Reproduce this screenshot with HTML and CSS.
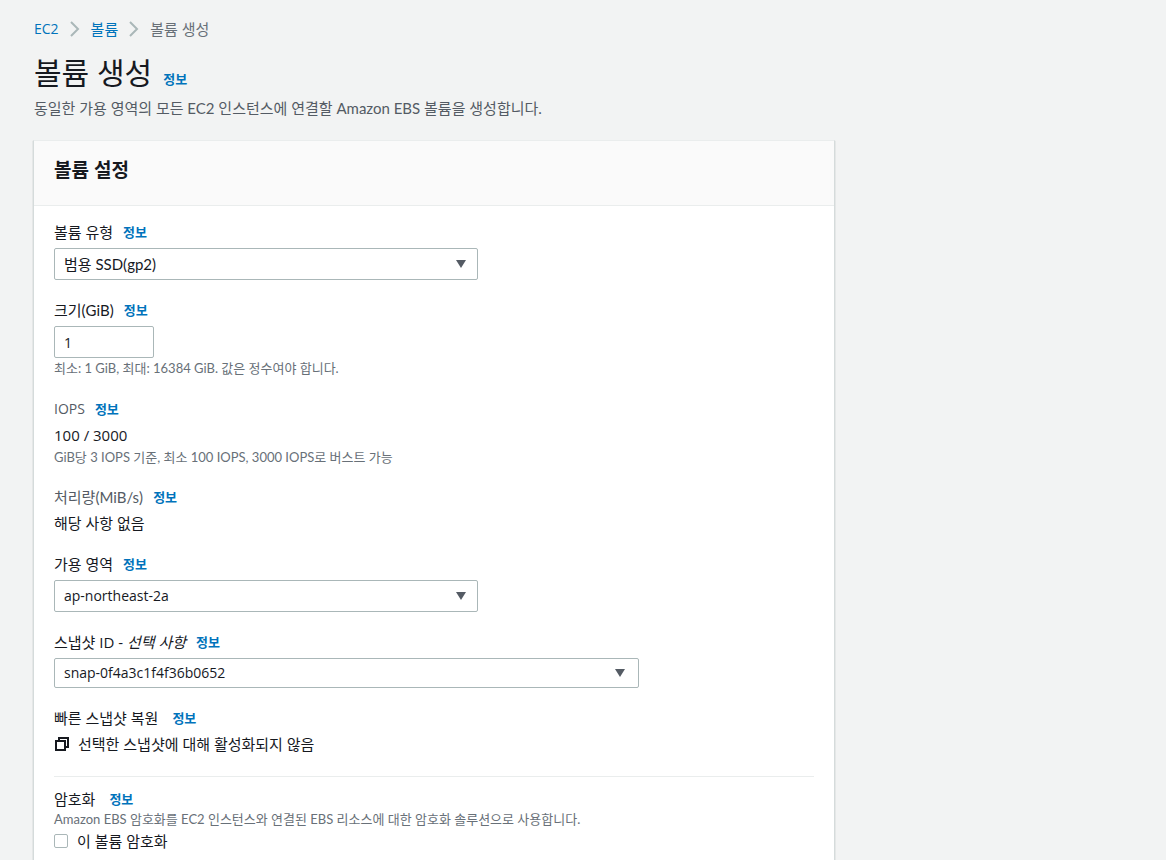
FILE: index.html
```html
<!DOCTYPE html>
<html lang="ko">

<head>
  <meta charset="UTF-8" />
  <meta name="viewport" content="width=device-width, initial-scale=1" />
  <title>볼륨 생성</title>
  <link rel="stylesheet" href="styles.css">
</head>

<body>
  <main class="page">
    <nav class="breadcrumb">
      <a class="latin" href="#ec2">EC2</a>
      <svg class="chevron" viewBox="0 0 10 16"><path d="M1 1l7 7-7 7" /></svg>
      <a href="#volumes">볼륨</a>
      <svg class="chevron" viewBox="0 0 10 16"><path d="M1 1l7 7-7 7" /></svg>
      <span>볼륨 생성</span>
    </nav>

    <header class="page-header">
      <h1>볼륨 생성</h1>
      <a class="info" href="#info">정보</a>
    </header>
    <p class="page-desc">동일한 가용 영역의 모든 EC2 인스턴스에 연결할 Amazon EBS 볼륨을 생성합니다.</p>

    <form class="card">
      <div class="card-header">
        <h2>볼륨 설정</h2>
      </div>

      <div class="card-body">
        <div class="field">
          <div class="field-label">
            <label for="volume-type">볼륨 유형</label>
            <a class="info" href="#info">정보</a>
          </div>
          <div class="select mixed">
            <select id="volume-type">
              <option>범용 SSD(gp2)</option>
            </select>
            <svg class="caret" viewBox="0 0 10 8"><path d="M0 0h10L5 8z" /></svg>
          </div>
        </div>

        <div class="field">
          <div class="field-label">
            <label class="mixed" for="size">크기(GiB)</label>
            <a class="info" href="#info">정보</a>
          </div>
          <input class="size-input" id="size" type="text" inputmode="numeric" value="1" />
          <p class="hint">최소: 1 GiB, 최대: 16384 GiB. 값은 정수여야 합니다.</p>
        </div>

        <div class="field">
          <div class="field-label muted">
            <span class="latin">IOPS</span>
            <a class="info" href="#info">정보</a>
          </div>
          <p class="value">100 / 3000</p>
          <p class="hint">GiB당 3 IOPS 기준, 최소 100 IOPS, 3000 IOPS로 버스트 가능</p>
        </div>

        <div class="field">
          <div class="field-label muted">
            <span class="mixed">처리량(MiB/s)</span>
            <a class="info" href="#info">정보</a>
          </div>
          <p class="value">해당 사항 없음</p>
        </div>

        <div class="field">
          <div class="field-label">
            <label for="zone">가용 영역</label>
            <a class="info" href="#info">정보</a>
          </div>
          <div class="select latin">
            <select id="zone">
              <option>ap-northeast-2a</option>
            </select>
            <svg class="caret" viewBox="0 0 10 8"><path d="M0 0h10L5 8z" /></svg>
          </div>
        </div>

        <div class="field">
          <div class="field-label">
            <label for="snapshot">스냅샷 ID - <em>선택 사항</em></label>
            <a class="info" href="#info">정보</a>
          </div>
          <div class="select select-wide latin">
            <select id="snapshot">
              <option>snap-0f4a3c1f4f36b0652</option>
            </select>
            <svg class="caret" viewBox="0 0 10 8"><path d="M0 0h10L5 8z" /></svg>
          </div>
        </div>

        <div class="field">
          <div class="field-label spaced">
            <span>빠른 스냅샷 복원</span>
            <a class="info" href="#info">정보</a>
          </div>
          <p class="value restore">
            <svg class="copy-icon" viewBox="0 0 14 14"><path d="M4 4V1h9v9h-3M1 4h9v9H1z" /></svg>
            선택한 스냅샷에 대해 활성화되지 않음
          </p>
        </div>

        <div class="encryption">
          <div class="field-label spaced">
            <span>암호화</span>
            <a class="info" href="#info">정보</a>
          </div>
          <p class="hint">Amazon EBS 암호화를 EC2 인스턴스와 연결된 EBS 리소스에 대한 암호화 솔루션으로 사용합니다.</p>
          <label class="checkbox">
            <input type="checkbox" />
            이 볼륨 암호화
          </label>
        </div>
      </div>
    </form>
  </main>
</body>

</html>
```
FILE: styles.css
```css
* {
  box-sizing: border-box;
}

body {
  margin: 0;
  background: #f2f3f3;
  color: #16191f;
  font-family: "Open Sans", "Noto Sans CJK KR", sans-serif;
  font-size: 15px;
  line-height: 22px;
}

h1,
h2,
p {
  margin: 0;
}

a {
  color: #0073bb;
  text-decoration: none;
}

a:hover {
  text-decoration: underline;
}

.page {
  max-width: 867px;
  padding: 18px 32px 40px 33px;
}

.breadcrumb {
  display: flex;
  align-items: center;
  gap: 11px;
  padding-left: 1px;
  color: #687078;
}

.chevron {
  width: 10px;
  height: 16px;
  fill: none;
  stroke: #aab7b8;
  stroke-width: 2;
}

.page-header {
  display: flex;
  align-items: baseline;
  gap: 11px;
  margin-top: 13px;
  padding-left: 1px;
}

h1 {
  font-size: 30px;
  font-weight: 400;
  line-height: 40px;
}

.info {
  font-size: 13px;
  font-weight: 700;
}

.page-desc {
  padding-left: 1px;
  margin-top: 4px;
  color: #545b64;
}

/* korean text with latin words in it */
.page-desc,
.hint,
.mixed {
  font-family: Lato, "Noto Sans CJK KR", sans-serif;
}

/* card */
.card {
  margin-top: 21px;
  background: #fff;
  border: 1px solid #d5dbdb;
  border-top-color: #eaeded;
  box-shadow: 0 1px 1px rgba(0, 28, 36, 0.3);
}

.card-header {
  padding: 17px 20px 23px;
  background: #fafafa;
  border-bottom: 1px solid #eaeded;
}

h2 {
  font-size: 19px;
  font-weight: 700;
  line-height: 24px;
}

.card-body {
  padding: 15px 20px 20px;
}

/* form fields */
.field {
  margin-bottom: 19px;
}

.field-label {
  display: flex;
  align-items: center;
  gap: 10px;
  height: 22px;
  margin-bottom: 5px;
}

.spaced {
  gap: 14px;
}

.muted {
  color: #545b64;
}

.latin {
  font-size: 14px;
}

.select {
  position: relative;
  max-width: 424px;
}

.select-wide {
  max-width: 585px;
}

select,
.size-input {
  display: block;
  width: 100%;
  height: 32px;
  padding: 0 9px;
  border: 1px solid #aab7b8;
  border-radius: 2px;
  background: #fff;
  color: #16191f;
  font: inherit;
  appearance: none;
}

.select-wide select {
  height: 30px;
}

.size-input {
  max-width: 100px;
  font-size: 14px;
}

.caret {
  position: absolute;
  top: calc(50% - 4px);
  right: 12px;
  width: 10px;
  height: 8px;
  fill: #545b64;
  pointer-events: none;
}

.select-wide .caret {
  right: 14px;
}

.value {
  padding-bottom: 2px;
  line-height: 20px;
}

.value:last-child {
  padding-bottom: 1px;
}

.hint {
  color: #687078;
  font-size: 13px;
  line-height: 21px;
}

.value + .hint {
  line-height: 20px;
}

.restore {
  display: flex;
  align-items: center;
  gap: 9px;
}

.copy-icon {
  width: 14px;
  height: 14px;
  margin-left: 1px;
  fill: none;
  stroke: #16191f;
  stroke-width: 2;
}

.encryption {
  margin-top: 21px;
  padding-top: 11px;
  border-top: 1px solid #eaeded;
}

.encryption .field-label {
  margin-bottom: 0;
}

.encryption .hint {
  line-height: 18px;
}

.checkbox {
  display: flex;
  align-items: center;
  gap: 9px;
  margin-top: 2px;
}

.checkbox input {
  width: 14px;
  height: 14px;
  margin: 0;
  border: 1px solid #aab7b8;
  border-radius: 2px;
  background: #fff;
  appearance: none;
}

.checkbox input:checked {
  background: #0073bb;
}
```
